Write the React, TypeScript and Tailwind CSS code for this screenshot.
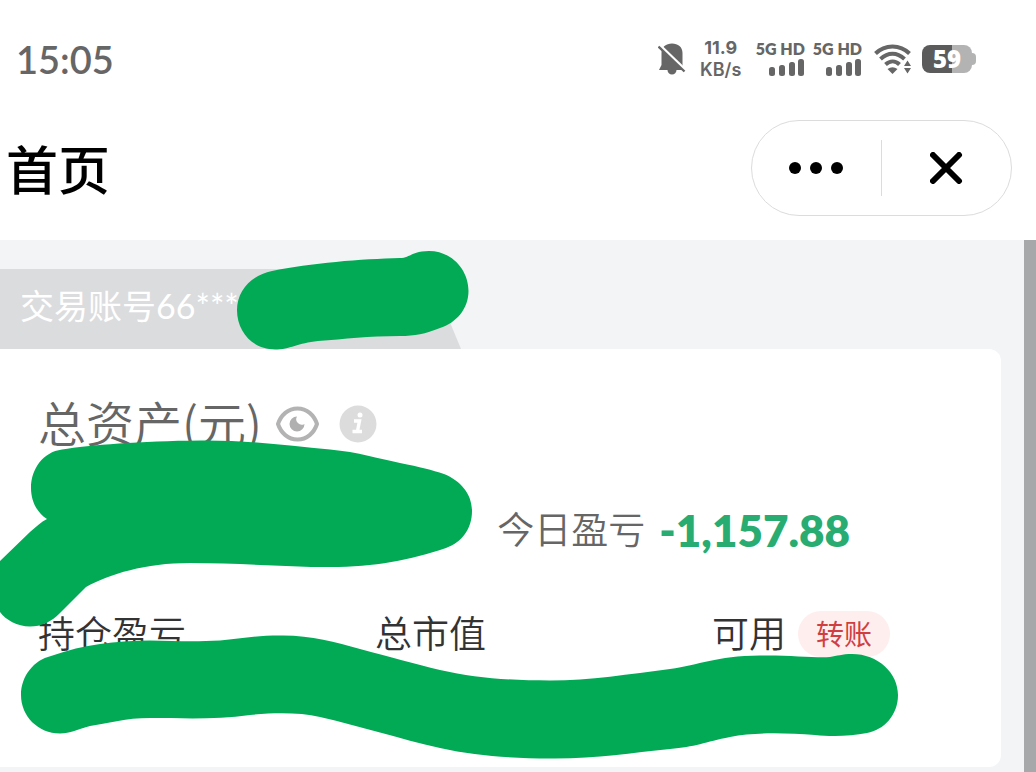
import React from "react";

function BellOffIcon() {
  return (
    <svg width="28" height="32" viewBox="0 0 28 32" aria-label="静音">
      <path
        d="M14 0.500C20 0.500 24.500 4 24.500 10V22L26 27H18.500A4.500 4.500 0 0 1 9.500 27H1L3.500 22V10C3.500 4 8 0.500 14 0.500Z"
        fill="#666"
      />
      <path d="M1 1.500L28 27.500" stroke="#fff" strokeWidth="3" />
      <path d="M0.500 3.500L26.500 28.500" stroke="#666" strokeWidth="2.400" />
    </svg>
  );
}

function Signal() {
  return (
    <div className="flex flex-col items-end">
      <span className="text-base leading-4 font-extrabold">5G HD</span>
      <svg width="36" height="18" viewBox="0 0 36 18" fill="#666" className="mt-0.5" aria-hidden="true">
        <rect x="0" y="8" width="6" height="9" rx="2.500" />
        <rect x="10" y="6" width="6" height="11" rx="2.500" />
        <rect x="20" y="3" width="6" height="14" rx="2.500" />
        <rect x="29" y="0" width="6" height="17" rx="2.500" />
      </svg>
    </div>
  );
}

function WifiIcon() {
  return (
    <svg width="38" height="32" viewBox="0 0 38 32" fill="none" aria-label="Wi-Fi">
      <path d="M1.500 10.500C11 1 26 1 35.500 10.500" stroke="#666" strokeWidth="4" />
      <path d="M6.500 16C14 9 23 9 30.500 16" stroke="#666" strokeWidth="4" />
      <path d="M11.500 21.500C16 17.500 21.500 17.500 25.500 21.500" stroke="#666" strokeWidth="4" />
      <path d="M13.500 26Q18.500 22.500 23.500 26L18.500 31Z" fill="#666" />
      <path d="M30 23L33.500 17.500L37 23ZM30 25L33.500 30.500L37 25Z" fill="#666" />
    </svg>
  );
}

function Battery() {
  return (
    <div className="flex items-center">
      <div className="flex h-7 w-[50px] items-center justify-center rounded-lg bg-linear-to-r from-[#5b5b5b] from-60% to-[#b3b3b3] to-60% font-['Open_Sans',sans-serif] text-2xl leading-7 font-extrabold text-white">
        59
      </div>
      <div className="h-3 w-1 rounded-r-sm bg-[#b3b3b3]" />
    </div>
  );
}

function EyeIcon() {
  return (
    <svg width="43" height="36" viewBox="0 0 43 36" aria-hidden="true">
      <path
        d="M2 18C5 9 12 2.500 21.500 2.500S38 9 41 18C38 27 31 33.500 21.500 33.500S5 27 2 18Z"
        fill="none"
        stroke="#b3b3b3"
        strokeWidth="4"
        strokeLinejoin="round"
      />
      <path d="M21 10.500A7.500 7.500 0 1 0 28.500 18A5.500 5.500 0 0 1 21 10.500Z" fill="#b0b0b0" />
    </svg>
  );
}

function InfoIcon() {
  return (
    <svg width="38" height="38" viewBox="0 0 38 38" aria-hidden="true">
      <circle cx="19" cy="19" r="18.500" fill="#dcdcdc" />
      <circle cx="21" cy="10" r="2.500" fill="#fff" />
      <path d="M15 16H20.500L18.500 26M13.500 26.500H23" fill="none" stroke="#fff" strokeWidth="3.400" />
    </svg>
  );
}

function BrushMarks() {
  return (
    <svg
      width="1036"
      height="532"
      viewBox="0 240 1036 532"
      fill="#02aa55"
      className="pointer-events-none absolute top-0 left-0 max-w-none"
      aria-hidden="true"
    >
      <path d="M237 310C237 290 252 275 272 271C310 263 362 259 400 258C410 258 412 251 429 251C452 251 468.500 270 468.500 291C468.500 309 456 323 440 328C425 334 415 336 400 336C368 336 345 339 318 341C298 343 290 349.500 275 349.500C253 349.500 237 332 237 310Z" />
      <path d="M31 488C31 469 43 452 62 449.500C90 445 140 441 200 440.500C250 440 290 446 330 449.500C358 452 380 459 400 463C420 467 432 470 444 474C461 481 472 494 472 511C472 529 462 542 446 548C410 560 375 567 330 567C285 567 240 563 190 563C145 563 110 574 86 587L60 613C51 622 41 626.500 30 626.500C17 626.500 6 620 0 612V561L30 532C36 527 41 522 47 519C36 512 31 500 31 488Z" />
      <path d="M21 695C21 676 34 660 51 656C85 644 115 641 150 640.500C175 641 195 642 220 640.500C240 639 255 635.500 280 635.500C310 635 335 642 360 649C390 657 415 664 440 670C475 678 510 680.500 550 680.500C590 680.500 630 674 670 669C700 665 715 656 760 655.500C790 655 815 658 830 657C837 656 842 654 852 654C878 654 898 673 898 695C898 715 884 730 867 733C850 736.500 830 736.500 815 735C785 733 755 732 730 737C705 742 695 747 670 749C630 753 595 759 550 758.500C510 758 475 756 440 748C400 739 360 726 320 717C300 712.500 275 712.500 250 715C215 720 180 718 150 718C125 718 110 723 90 726C78 729 70 733.500 60 733.500C38 733.500 21 716 21 695Z" />
    </svg>
  );
}

export default function App() {
  return (
    <div className="flex min-h-screen flex-col bg-white font-[Lato,'Noto_Sans_CJK_SC',sans-serif] text-[#333]">
      <div className="flex h-[118px] items-center justify-between pr-15 pl-4 text-[#666]">
        <time className="text-[38px] leading-12 font-semibold">15:05</time>
        <div className="flex items-center">
          <BellOffIcon />
          <div className="ml-3 flex w-[46px] flex-col items-center font-[Inter,sans-serif] text-lg leading-[22px]">
            <span className="font-bold">11.9</span>
            <span className="font-semibold">KB/s</span>
          </div>
          <div className="ml-3 flex gap-2">
            <Signal />
            <Signal />
          </div>
          <div className="ml-3 flex items-center gap-2.5">
            <WifiIcon />
            <Battery />
          </div>
        </div>
      </div>

      <header className="flex h-[122px] items-start justify-between pt-0.5 pr-6 pl-1.5">
        <h1 className="text-[52px] leading-[100px] font-medium text-black">首页</h1>
        <div className="flex h-24 w-[261px] items-center rounded-full border border-[#dcdcdc]">
          <button type="button" aria-label="更多" className="flex h-full flex-1 items-center justify-center">
            <svg width="56" height="14" viewBox="0 0 56 14">
              <circle cx="6" cy="7" r="6" />
              <circle cx="27" cy="7" r="6" />
              <circle cx="48" cy="7" r="6" />
            </svg>
          </button>
          <div className="h-14 w-px bg-[#dcdcdc]" />
          <button type="button" aria-label="关闭" className="flex h-full flex-1 items-center justify-center">
            <svg width="34" height="32" viewBox="0 0 34 32">
              <path d="M3 3L29 29M29 3L3 29" stroke="#000" strokeWidth="6" strokeLinecap="round" />
            </svg>
          </button>
        </div>
      </header>

      <main className="relative flex flex-1 overflow-hidden bg-[#f3f4f6]">
        <div className="flex-1 pt-[29px] pr-[23px] pb-[5px]">
          <div className="h-20 w-[461px] bg-[#dbdcde] pl-5 text-[34px] leading-[74px] text-white [clip-path:polygon(0_0,428px_0,100%_100%,0_100%)]">
            交易账号66***
          </div>
          <section className="h-[418px] rounded-r-xl bg-white pt-10 pl-[38px]">
            <div className="flex h-[70px] items-center">
              <h2 className="pb-1.5 font-['Noto_Sans_CJK_SC',sans-serif] text-[48px] leading-[64px] font-[350] text-[#666]">
                总资产(元)
              </h2>
              <button type="button" aria-label="显示金额" className="ml-3.5">
                <EyeIcon />
              </button>
              <button type="button" aria-label="说明" className="ml-5">
                <InfoIcon />
              </button>
            </div>
            <p className="mt-9 flex h-[70px] items-center justify-end pr-[151px]">
              <span className="text-[37px] leading-[70px] font-[350] text-[#666]">今日盈亏</span>
              <strong className="ml-3.5 text-[44px] leading-[70px] font-extrabold text-[#28ac71]">-1,157.88</strong>
            </p>
            <div className="mt-11 grid grid-cols-[35%_35%_30%] text-[37px] leading-[50px] font-[350]">
              <span>持仓盈亏</span>
              <span>总市值</span>
              <div className="flex items-center">
                <span>可用</span>
                <button type="button" className="ml-3 h-[46px] rounded-full bg-[#ffeeee] px-[18px] text-[28px] leading-[46px] font-normal text-[#cf3f42]">
                  转账
                </button>
              </div>
            </div>
          </section>
        </div>
        <div className="w-3 bg-[#a7a8aa]" />
        <BrushMarks />
      </main>
    </div>
  );
}
